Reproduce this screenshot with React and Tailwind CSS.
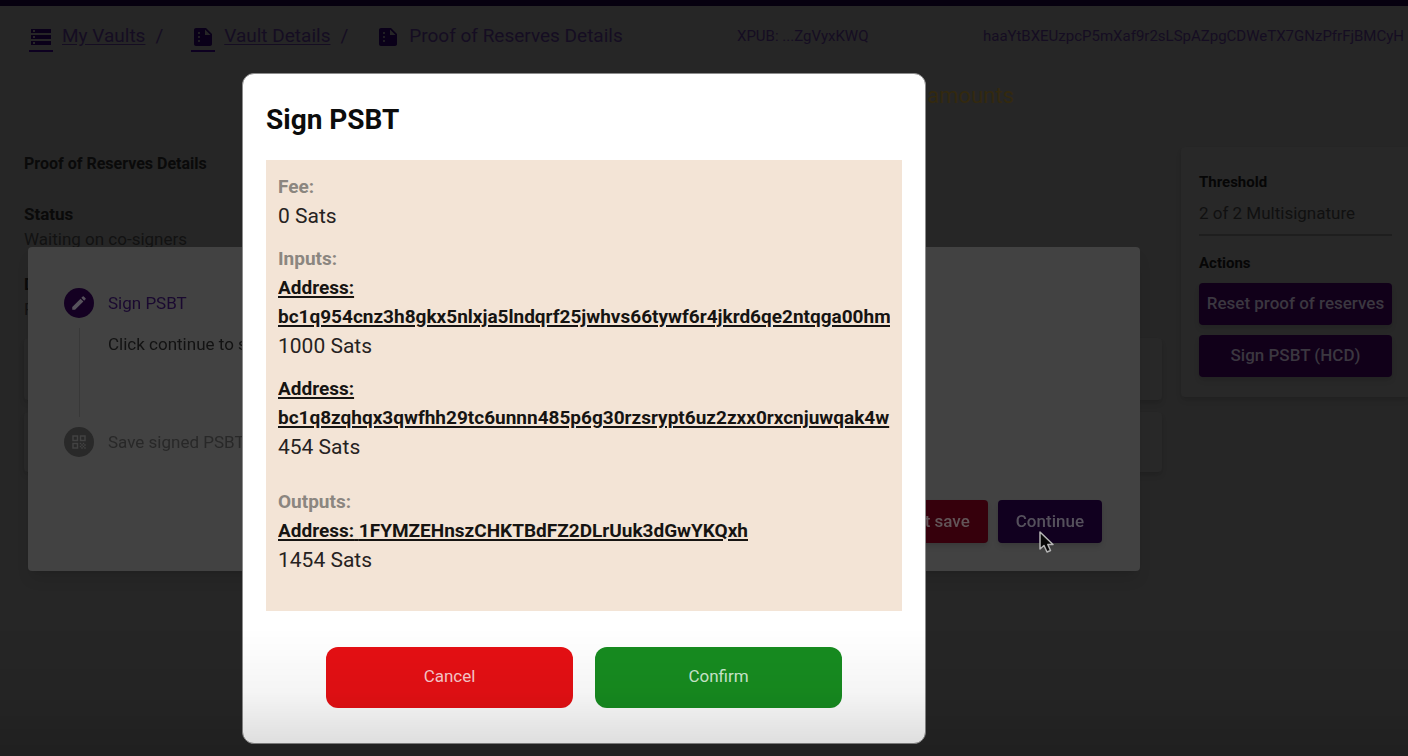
import { MdStorage, MdSummarize, MdEdit, MdQrCode } from "react-icons/md";

function Crumb({ icon: Icon, children }) {
  return (
    <li className="flex items-center">
      <a href="#" className="flex items-center gap-[9px]">
        <span className="mt-[3px] border-b-2 border-[#0d0020] pb-[1px]">
          <Icon className="size-6 text-[#0a0019]" />
        </span>
        <span className="underline underline-offset-2">{children}</span>
      </a>
      <span className="ml-2.5">/</span>
    </li>
  );
}

function Entry({ address, split, amount }) {
  return (
    <div>
      <a
        href="#"
        className="block overflow-hidden text-[19px] leading-[29px] font-bold whitespace-nowrap text-[#161412] underline decoration-2 underline-offset-2"
      >
        Address:{split ? <br /> : " "}
        {address}
      </a>
      <p className="text-[21px] leading-[31px] text-[#26221f]">{amount}</p>
    </div>
  );
}

function Label({ children }) {
  return <h3 className="text-[19px] leading-[29px] font-bold text-[#8b8680]">{children}</h3>;
}

function Header() {
  return (
    <header className="border-t-6 border-[#06000f]">
      <div className="flex h-[61px] items-center overflow-hidden whitespace-nowrap text-[#150d22]">
        <nav aria-label="Breadcrumb" className="pl-[29px]">
          <ol className="flex items-center gap-7 text-[19px]">
            <Crumb icon={MdStorage}>My Vaults</Crumb>
            <Crumb icon={MdSummarize}>Vault Details</Crumb>
            <li className="flex items-center gap-[9px]" aria-current="page">
              <MdSummarize className="size-6 text-[#0a0019]" />
              Proof of Reserves Details
            </li>
          </ol>
        </nav>
        <div className="ml-auto flex w-[671px] shrink-0 text-[15px]">
          <span className="w-[246px] shrink-0">XPUB: ...ZgVyxKWQ</span>
          <span>haaYtBXEUzpcP5mXaf9r2sLSpAZpgCDWeTX7GNzPfrFjBMCyH</span>
        </div>
      </div>
    </header>
  );
}

function Details() {
  return (
    <section className="flex-1 pt-2 pl-6 text-[17px] leading-[25px] text-[#121212]">
      <h1 className="text-[16px] leading-[17px] font-bold text-[#0a0a0a]">Proof of Reserves Details</h1>
      <h2 className="mt-[30px] font-bold text-[#0a0a0a]">Status</h2>
      <p>Waiting on co-signers</p>
      <h2 className="mt-5 font-bold text-[#0a0a0a]">D</h2>
      <p>P</p>
      <div className="mt-4 flex flex-col gap-3">
        <div className="h-[62px] rounded bg-[#282828] shadow-md" />
        <div className="h-[60px] rounded bg-[#282828] shadow-md" />
      </div>
    </section>
  );
}

function Sidebar() {
  return (
    <aside className="w-[227px] shrink-0 self-start rounded-l bg-[#282828] pt-[25px] pr-4 pb-5 pl-[18px] text-[#101010] shadow-md">
      <h2 className="text-[15px] leading-5 font-bold text-[#060606]">Threshold</h2>
      <p className="mt-2 border-b-2 border-[#1e1e1e] pb-2 text-[17px] leading-[26px]">2 of 2 Multisignature</p>
      <h2 className="mt-[17px] text-[15px] leading-5 font-bold text-[#060606]">Actions</h2>
      <div className="mt-2.5 flex flex-col gap-2.5">
        <button className="h-[42px] rounded bg-[#110019] text-[17px] font-medium whitespace-nowrap text-[#3b3740] shadow-md">
          Reset proof of reserves
        </button>
        <button className="h-[42px] rounded bg-[#110019] text-[17px] font-medium text-[#3b3740] shadow-md">
          Sign PSBT (HCD)
        </button>
      </div>
    </aside>
  );
}

function StepsDialog() {
  return (
    <div className="fixed inset-0 flex items-center justify-center pt-[62px] pr-60">
      <section
        aria-label="Signing steps"
        className="mx-7 flex h-[324px] flex-1 flex-col rounded bg-[#424242] pt-[41px] pr-[38px] pb-7 pl-9 text-[17px] shadow-lg"
      >
        <ol>
          <li className="flex gap-3.5">
            <div className="flex flex-col items-center">
              <span className="flex size-[30px] items-center justify-center rounded-full bg-[#140022] text-[#57525c]">
                <MdEdit className="size-[18px]" />
              </span>
              <span className="my-2.5 h-[89px] w-px bg-[#383838]" />
            </div>
            <div>
              <h2 className="leading-[30px] text-[#1a0930]">Sign PSBT</h2>
              <p className="mt-3 leading-[28px] text-[#121212]">Click continue to s</p>
            </div>
          </li>
          <li className="flex gap-3.5 text-[#282828]">
            <span className="flex size-[30px] items-center justify-center rounded-full bg-[#292929] text-[#424242]">
              <MdQrCode className="size-[18px]" />
            </span>
            <span className="leading-[30px]">Save signed PSBT</span>
          </li>
        </ol>
        <div className="mt-auto flex justify-end gap-2.5 font-medium">
          <button className="h-[43px] rounded bg-[#36000c] px-[18px] text-[#625458] shadow-md">Do not save</button>
          <button className="h-[43px] rounded bg-[#11001f] px-[18px] text-[#55505c] shadow-md">Continue</button>
        </div>
      </section>
      <svg
        className="absolute top-[530px] left-[1038px] h-[24px] w-[17px]"
        viewBox="0 0 17 24"
        aria-hidden="true"
      >
        <path d="M2 2V19L6 15.5L9 22L12.5 20.5L9.8 14.5H15Z" fill="#080808" stroke="#b5b5b5" strokeWidth="1.5" strokeLinejoin="round" />
      </svg>
    </div>
  );
}

function SignDialog() {
  return (
    <div className="fixed inset-0 flex items-center justify-center pt-[60px] pr-60">
      <section
        role="dialog"
        aria-modal="true"
        aria-labelledby="sign-title"
        className="w-[684px] rounded-xl border border-[#8c8c8c] bg-white px-[23px] pt-[27px] pb-[35px]"
      >
        <h2 id="sign-title" className="text-[28px] leading-[38px] font-bold text-[#0c0c0c]">
          Sign PSBT
        </h2>
        <div className="mt-[21px] flex flex-col gap-3 bg-[#f3e4d6] px-3 pt-3 pb-[35px]">
          <div>
            <Label>Fee:</Label>
            <p className="text-[21px] leading-[31px] text-[#26221f]">0 Sats</p>
          </div>
          <div className="flex flex-col">
            <Label>Inputs:</Label>
            <div className="flex flex-col gap-3">
              <Entry split address="bc1q954cnz3h8gkx5nlxja5lndqrf25jwhvs66tywf6r4jkrd6qe2ntqga00hm" amount="1000 Sats" />
              <Entry split address="bc1q8zqhqx3qwfhh29tc6unnn485p6g30rzsrypt6uz2zxx0rxcnjuwqak4w" amount="454 Sats" />
            </div>
          </div>
          <div className="mt-3">
            <Label>Outputs:</Label>
            <Entry address="1FYMZEHnszCHKTBdFZ2DLrUuk3dGwYKQxh" amount="1454 Sats" />
          </div>
        </div>
        <div className="mt-9 flex justify-center gap-[22px] text-[17px]">
          <button className="h-[61px] w-[247px] rounded-xl bg-[#e61014] text-[#f9c9ca]">Cancel</button>
          <button className="h-[61px] w-[247px] rounded-xl bg-[#178c20] text-[#cbe8cd]">Confirm</button>
        </div>
      </section>
    </div>
  );
}

export default function App() {
  return (
    <div className="min-h-screen overflow-hidden bg-[#262626] font-[Roboto,sans-serif]">
      <Header />
      <p className="mt-[15px] pr-[394px] text-right text-[22px] leading-[28px] text-[#33290f]">amounts</p>
      <main className="mt-[37px] flex items-start gap-[19px]">
        <Details />
        <Sidebar />
      </main>
      <StepsDialog />
      <SignDialog />
      <div className="pointer-events-none fixed inset-x-0 bottom-0 h-32 bg-linear-to-b from-transparent via-black/4 to-black/15" />
    </div>
  );
}
